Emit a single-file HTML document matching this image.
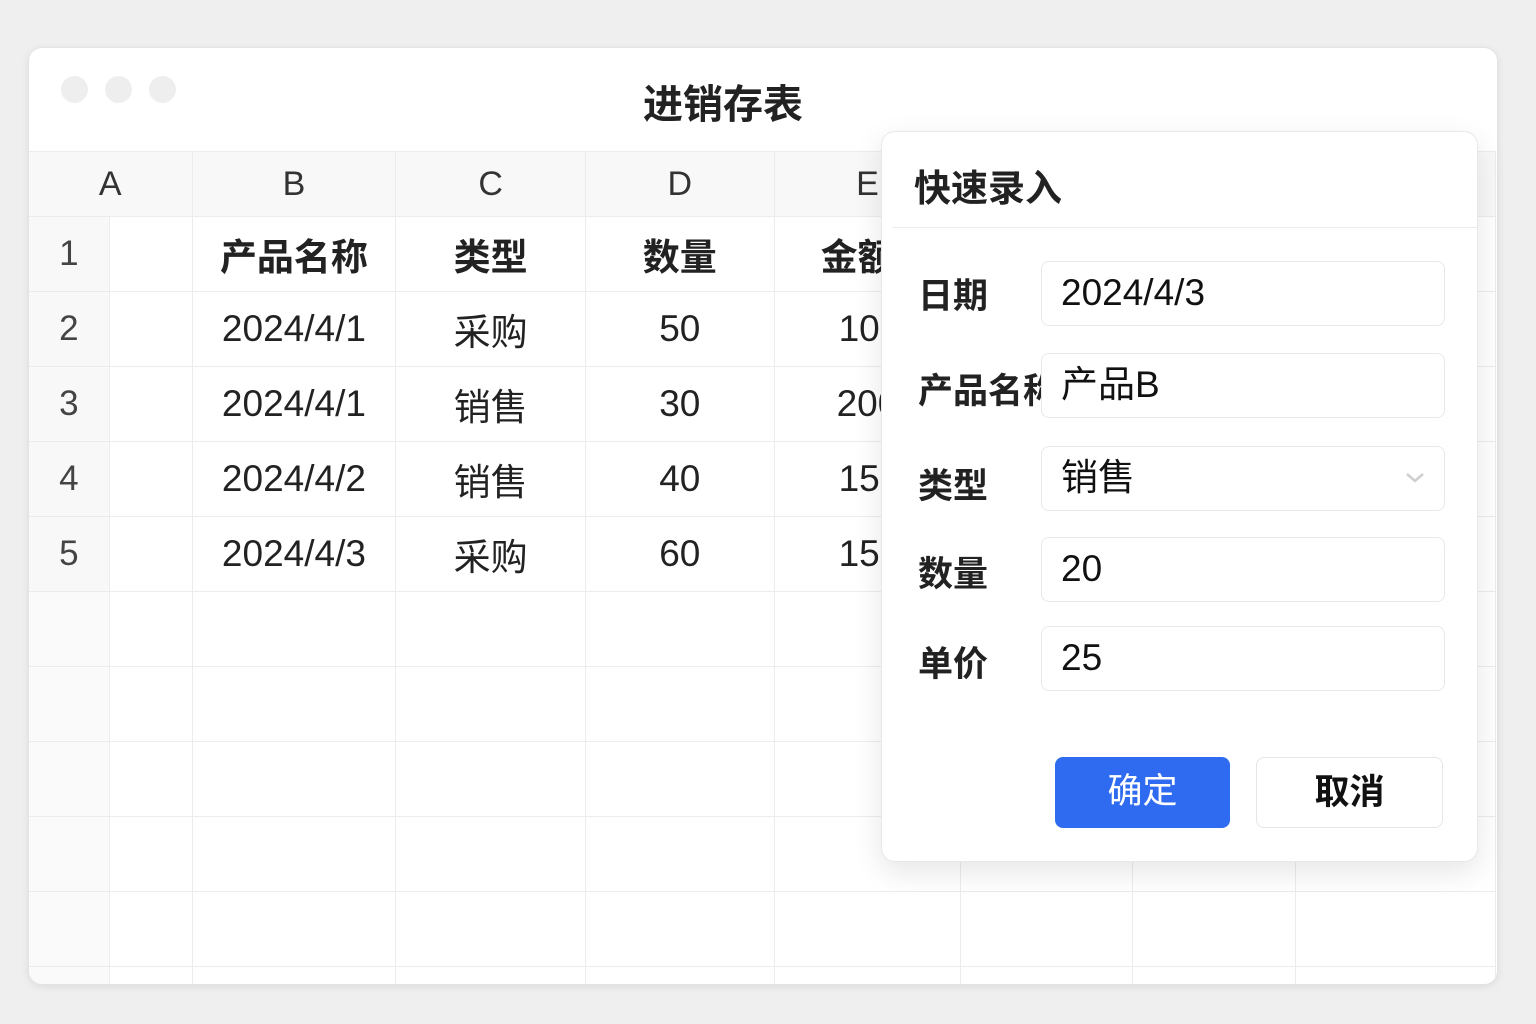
<!DOCTYPE html>
<html><head><meta charset="utf-8"><style>
*{margin:0;padding:0;box-sizing:border-box}
body{width:1536px;height:1024px;background:#efefef;position:relative;overflow:hidden;font-family:"Liberation Sans","Noto Sans CJK SC",sans-serif;color:#222}
.win{position:absolute;left:28px;top:47px;width:1470px;height:938px;background:#fff;border-radius:14px;overflow:hidden;box-shadow:0 2px 8px rgba(0,0,0,.08);border:1px solid #e4e4e4}
.dot{position:absolute;top:28px;width:27px;height:27px;border-radius:50%;background:#eeeeee}
.title{position:absolute;left:506px;width:376px;top:24px;text-align:center;font-size:40px;font-weight:bold;color:#222}
table{position:absolute;left:-1px;top:103px;border-collapse:collapse;table-layout:fixed}
td{border:1px solid #ececec;text-align:center;font-size:37px;color:#222;white-space:nowrap;overflow:visible}
tr.h td{height:65px;background:#f8f8f8;color:#333;font-size:34px}
tr.r td{height:75px}
td.n{background:#f8f8f8;color:#444;text-align:center;font-size:35px}
tr.b td{font-weight:bold}
tr.b td.n{font-weight:normal}
.dlg{position:absolute;left:881px;top:131px;width:597px;height:731px;background:#fff;border-radius:14px;border:1px solid #e8e8e8;box-shadow:0 10px 30px rgba(0,0,0,.10)}
.dt{position:absolute;left:32px;top:26px;font-size:37px;color:#222;font-weight:bold}
.sep{position:absolute;left:10px;right:0;top:95px;border-top:1px solid #ececec}
.lb{position:absolute;left:36px;font-size:35px;font-weight:bold;color:#222;white-space:nowrap}
.in{position:absolute;left:159px;width:404px;height:65px;background:#fff;border:1.5px solid #e8e8e8;border-radius:8px;font-size:37px;padding-left:19px;line-height:62px;color:#111}
.btn{position:absolute;top:625px;height:71px;border-radius:8px;font-size:35px;text-align:center;line-height:70px}
</style></head><body>
<div class="win">
<div class="dot" style="left:32px"></div><div class="dot" style="left:76px"></div><div class="dot" style="left:120px"></div>
<div class="title">进销存表</div>
<table>
<colgroup><col style="width:81px"><col style="width:83px"><col style="width:204px"><col style="width:190px"><col style="width:189px"><col style="width:187px"><col style="width:172px"><col style="width:163px"><col style="width:201px"></colgroup>
<tr class="h"><td colspan="2">A</td><td>B</td><td>C</td><td>D</td><td>E</td><td>F</td><td>G</td><td>H</td></tr>
<tr class="r b"><td class="n">1</td><td></td><td>产品名称</td><td>类型</td><td>数量</td><td style="text-align:left;padding-left:46px">金额</td><td></td><td></td><td></td></tr>
<tr class="r"><td class="n">2</td><td></td><td>2024/4/1</td><td>采购</td><td>50</td><td style="text-align:left;padding-left:64px">1000</td><td></td><td></td><td></td></tr>
<tr class="r"><td class="n">3</td><td></td><td>2024/4/1</td><td>销售</td><td>30</td><td style="text-align:left;padding-left:62px">2000</td><td></td><td></td><td></td></tr>
<tr class="r"><td class="n">4</td><td></td><td>2024/4/2</td><td>销售</td><td>40</td><td style="text-align:left;padding-left:64px">1500</td><td></td><td></td><td></td></tr>
<tr class="r"><td class="n">5</td><td></td><td>2024/4/3</td><td>采购</td><td>60</td><td style="text-align:left;padding-left:64px">1500</td><td></td><td></td><td></td></tr>
<tr class="r"><td class="n" style="background:#fafafa"></td><td></td><td></td><td></td><td></td><td></td><td></td><td></td><td></td></tr>
<tr class="r"><td class="n" style="background:#fafafa"></td><td></td><td></td><td></td><td></td><td></td><td></td><td></td><td></td></tr>
<tr class="r"><td class="n" style="background:#fafafa"></td><td></td><td></td><td></td><td></td><td></td><td></td><td></td><td></td></tr>
<tr class="r"><td class="n" style="background:#fafafa"></td><td></td><td></td><td></td><td></td><td></td><td></td><td></td><td></td></tr>
<tr class="r"><td class="n" style="background:#fafafa"></td><td></td><td></td><td></td><td></td><td></td><td></td><td></td><td></td></tr>
<tr class="r"><td class="n" style="background:#fafafa"></td><td></td><td></td><td></td><td></td><td></td><td></td><td></td><td></td></tr>
</table>
</div>
<div class="dlg">
<div class="dt">快速录入</div>
<div class="sep"></div>
<div class="lb" style="top:136px">日期</div>
<div class="in" style="top:129px">2024/4/3</div>
<div class="lb" style="top:231px">产品名称</div>
<div class="in" style="top:221px">产品B</div>
<div class="lb" style="top:326px">类型</div>
<div class="in" style="top:314px">销售<svg style="position:absolute;right:18px;top:24px" width="22" height="14" viewBox="0 0 22 14"><path d="M3 3 L11 10 L19 3" fill="none" stroke="#cfcfcf" stroke-width="2.5"/></svg></div>
<div class="lb" style="top:414px">数量</div>
<div class="in" style="top:405px">20</div>
<div class="lb" style="top:504px">单价</div>
<div class="in" style="top:494px">25</div>
<div class="btn" style="left:173px;width:175px;background:#2f6bf0;color:#fff">确定</div>
<div class="btn" style="left:374px;width:187px;border:1.5px solid #e6e6e6;color:#111;font-weight:bold">取消</div>
</div>
</body></html>
